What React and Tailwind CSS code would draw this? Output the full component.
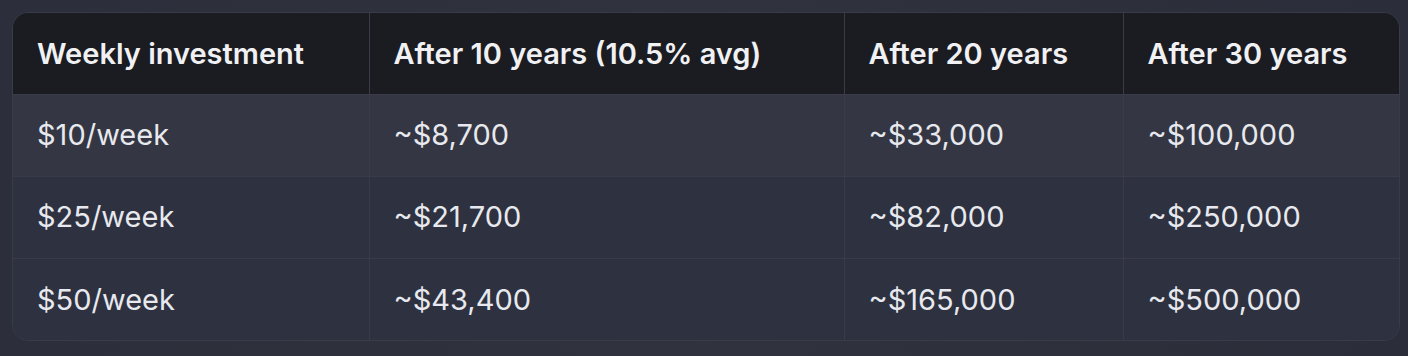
import React from 'react';

const rows = [
  ['$10/week', '~$8,700', '~$33,000', '~$100,000'],
  ['$25/week', '~$21,700', '~$82,000', '~$250,000'],
  ['$50/week', '~$43,400', '~$165,000', '~$500,000'],
];

const headers = ['Weekly investment', 'After 10 years (10.5% avg)', 'After 20 years', 'After 30 years'];

export default function App() {
  return (
    <div
      className="w-[1408px] h-[356px] bg-gradient-to-r from-[#2c2f3b] via-[#30323d] to-[#2b2e3a] pt-3 pl-3 pr-2"
      style={{ fontFamily: 'Inter, "Open Sans", sans-serif' }}
    >
      <div className="rounded-2xl border border-[#393c48] overflow-hidden">
        <table className="w-full table-fixed border-collapse text-[29px]">
          <colgroup>
            <col className="w-[356px]" />
            <col className="w-[475px]" />
            <col className="w-[279px]" />
            <col />
          </colgroup>
          <thead>
            <tr className="bg-[#1a1c22] h-[81px]">
              {headers.map((h, i) => (
                <th
                  key={h}
                  className={`text-left font-semibold text-[#f1f1f4] pl-6 ${i > 0 ? 'border-l border-[#393c48]' : ''}`}
                >
                  {h}
                </th>
              ))}
            </tr>
          </thead>
          <tbody>
            {rows.map((r, ri) => (
              <tr key={ri} className={`h-[82px] border-t border-[#393c48] ${ri === 0 ? 'bg-[#343743]' : 'bg-[#2d3140]'}`}>
                {r.map((c, ci) => (
                  <td
                    key={ci}
                    className={`text-left text-[#e8e9ee] pl-6 ${ci > 0 ? 'border-l border-[#393c48]' : ''}`}
                  >
                    {c}
                  </td>
                ))}
              </tr>
            ))}
          </tbody>
        </table>
      </div>
    </div>
  );
}
